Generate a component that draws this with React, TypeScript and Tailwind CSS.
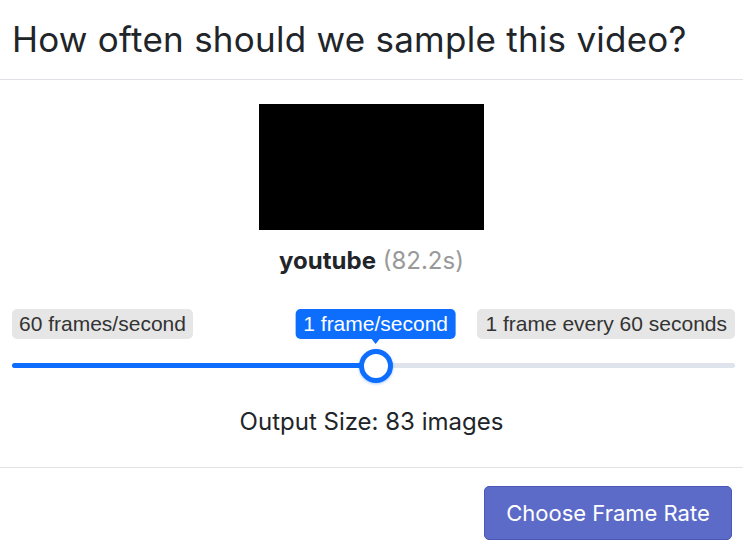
import React from "react";

const inter = "font-['Inter','Liberation_Sans',sans-serif]";
const arial = "font-['Liberation_Sans',Arial,sans-serif]";

export default function App() {
  const pct = 50.3;
  return (
    <div className={`w-[743px] h-[554px] bg-white text-[#212529] ${inter}`}>
      <div className="h-[80px] flex items-center px-3 border-b border-[#dee2e6]">
        <h1 className="text-[35px] leading-none font-normal text-[#212529] tracking-[0.25px]">
          How often should we sample this video?
        </h1>
      </div>

      <div className="flex flex-col items-center pt-[24px] pb-[31px] border-b border-[#e3e3e3]">
        <div className="w-[225px] h-[126px] bg-black" />
        <div className="mt-[17px] text-[24px] leading-[28px]">
          <span className="font-bold">youtube</span>{" "}
          <span className="text-[#999999]">(82.2s)</span>
        </div>

        <div className="w-full pl-3 pr-2 mt-[34px]">
          <div className={`relative flex justify-between ${arial} text-[21px] leading-[30px] text-[#333333]`}>
            <span className="bg-[#e6e6e6] rounded-[5px] px-[7px]">60 frames/second</span>
            <span
              className="absolute top-0 -translate-x-1/2 bg-[#0d6efd] text-white rounded-[5px] px-[8px] whitespace-nowrap"
              style={{ left: `${pct}%` }}
            >
              1 frame/second
              <span className="absolute left-1/2 -translate-x-1/2 top-full w-0 h-0 border-x-[4px] border-x-transparent border-t-[5px] border-t-[#0d6efd]" />
            </span>
            <span className="bg-[#e6e6e6] rounded-[5px] px-[8px]">1 frame every 60 seconds</span>
          </div>

          <div className="relative mt-[24px] h-[5px] rounded-full bg-[#dfe4ec]">
            <div className="h-full rounded-full bg-[#0d6efd]" style={{ width: `${pct}%` }} />
            <div
              className="absolute top-1/2 -translate-x-1/2 -translate-y-1/2 w-[34px] h-[34px] rounded-full bg-white border-[5px] border-[#0d6efd] shadow-[0_1px_3px_rgba(13,110,253,0.35)]"
              style={{ left: `${pct}%` }}
            />
          </div>
        </div>

        <div className="mt-[40px] text-[24px] leading-[28px] text-[#212529]">
          Output Size: 83 images
        </div>
      </div>

      <div className="flex justify-end pt-[18px] pr-[11px]">
        <button className="w-[248px] h-[54px] rounded-[5px] bg-[#5c6bc8] border border-[#4a58b5] text-white text-[22px]">
          Choose Frame Rate
        </button>
      </div>
    </div>
  );
}
